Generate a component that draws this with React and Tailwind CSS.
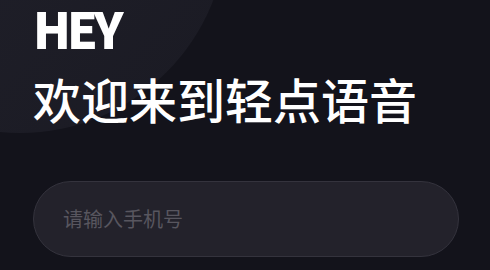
export default function App() {
  return (
    <div className="relative w-[490px] h-[270px] overflow-hidden bg-[#13131b]" style={{ fontFamily: '"Noto Sans CJK SC", "Noto Sans", sans-serif' }}>
      <div className="absolute left-[-187px] top-[-281px] w-[414px] h-[414px] rounded-full bg-gradient-to-br from-[#23232d] to-[#1a1a23]" />
      <div className="relative flex flex-col pl-[33px]">
        <div className="text-white font-black text-[49px] leading-none mt-[3px] tracking-[-4px]">HEY</div>
        <div className="text-white font-medium text-[48px] leading-none mt-[22px]">欢迎来到轻点语音</div>
        <div className="mt-[59px] w-[426px] h-[76px] rounded-full border border-[#34333d] bg-[#23222b] flex items-center pl-[29px]">
          <span className="text-[20px] text-[#58565f]">请输入手机号</span>
        </div>
      </div>
    </div>
  );
}
